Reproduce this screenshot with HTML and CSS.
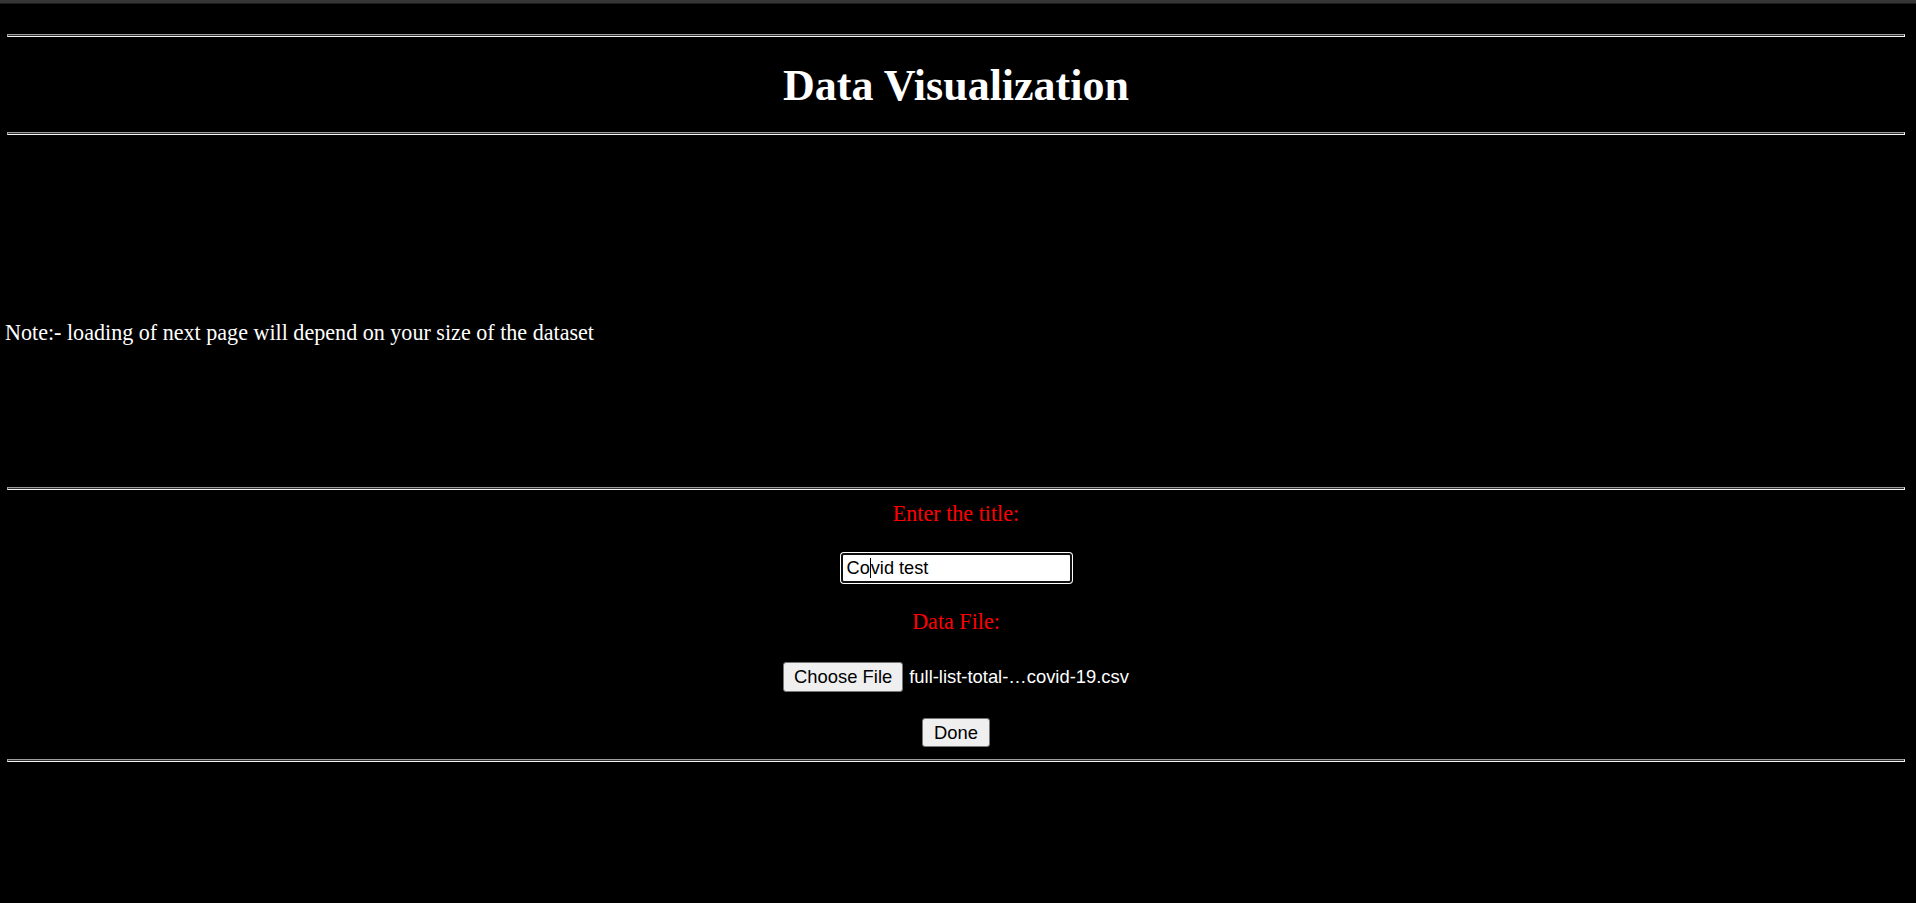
FILE: index.html
```html
<!DOCTYPE html>
<html lang="en">
<head>
<meta charset="utf-8">
<title>Data Visualization</title>
<link rel="stylesheet" href="styles.css">
</head>
<body>
<div class="topbar"></div>
<div class="page">
  <hr class="rule rule-first">
  <h1 class="title">Data Visualization</h1>
  <hr class="rule">
  <p class="note">Note:- loading of next page will depend on your size of the dataset</p>
  <hr class="rule rule-form">
  <form class="form">
    <label class="label label-title">Enter the title:</label>
    <div class="textbox"><span>Co</span><span class="caret"></span><span>vid test</span></div>
    <label class="label label-file">Data File:</label>
    <div class="file-row">
      <button type="button" class="btn btn-choose">Choose File</button>
      <span class="file-name">full-list-total-…covid-19.csv</span>
    </div>
    <button type="button" class="btn btn-done">Done</button>
  </form>
  <hr class="rule rule-last">
</div>
</body>
</html>
```
FILE: styles.css
```css
html, body {
  margin: 0;
  padding: 0;
  background: #000;
}
body {
  color: #fff;
  font-family: "Liberation Serif", "Times New Roman", serif;
  font-size: 22.1px;
  height: 903px;
  overflow: hidden;
}
.topbar {
  height: 3px;
  background: #363636;
  border-bottom: 1px solid #1c1c1c;
}
.page {
  padding: 0 11px 0 5px;
}
.rule {
  margin: 0 0 0 2px;
  height: 1px;
  border-style: solid;
  border-width: 1px;
  border-color: #9c9c9c #f4f4f4 #f4f4f4 #9c9c9c;
  background: #2e2e2e;
}
.rule-first {
  margin-top: 30px;
}
.title {
  margin: 24px 0 21px 2px;
  font-size: 44px;
  line-height: 50px;
  font-weight: bold;
  text-align: center;
}
.note {
  margin: 185px 0 142px 0;
  line-height: 25px;
}
.form {
  margin: 0 0 0 2px;
  display: flex;
  flex-direction: column;
  align-items: center;
}
.label {
  color: #ff0000;
  line-height: 25px;
}
.label-title {
  margin-top: 11px;
}
.textbox {
  margin-top: 27px;
  box-sizing: border-box;
  width: 231px;
  height: 30px;
  border: 2px solid #101010;
  border-radius: 3px;
  box-shadow: 0 0 0 1px #fff;
  background: #fff;
  color: #000;
  font-family: "Liberation Sans", Arial, sans-serif;
  font-size: 18.2px;
  line-height: 26px;
  padding: 0 4px;
  display: flex;
  align-items: center;
}
.caret {
  display: inline-block;
  width: 1px;
  height: 20px;
  background: #000;
}
.label-file {
  margin-top: 26px;
}
.file-row {
  margin-top: 28px;
  display: flex;
  align-items: center;
  gap: 6px;
}
.btn {
  box-sizing: border-box;
  height: 30px;
  padding: 0 10px;
  background: #efefef;
  border: 1px solid #767676;
  border-radius: 3px;
  color: #000;
  font-family: "Liberation Sans", Arial, sans-serif;
  font-size: 18.4px;
  line-height: 28px;
}
.file-name {
  font-family: "Liberation Sans", Arial, sans-serif;
  font-size: 18.4px;
  color: #fff;
}
.btn-done {
  margin-top: 26px;
  height: 29px;
  padding: 0 11px;
}
.rule-form {
  margin-top: 0;
}
.rule-last {
  margin-top: 12px;
}
```
